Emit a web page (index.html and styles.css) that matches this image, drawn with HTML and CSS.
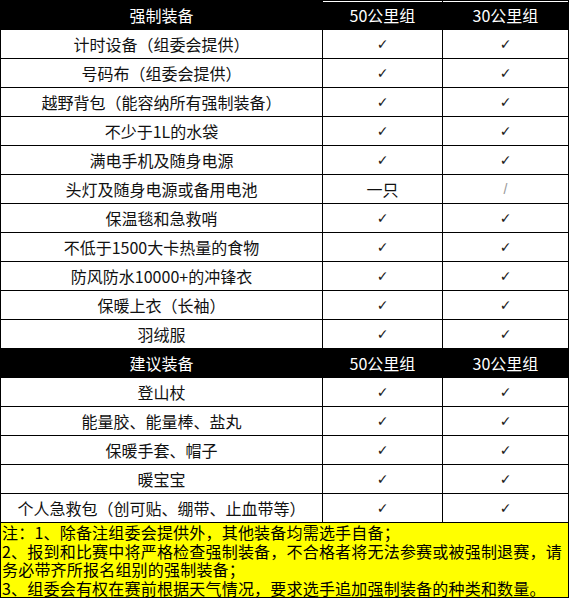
FILE: index.html
```html
<!DOCTYPE html>
<html lang="zh">
<head>
<meta charset="utf-8">
<link rel="stylesheet" href="styles.css">
</head>
<body>
<table class="gear">
  <colgroup><col class="c1"><col class="c2"><col class="c3"></colgroup>
  <tr class="head">
    <td>强制装备</td><td class="top">50公里组</td><td class="top">30公里组</td>
  </tr>
  <tr><td>计时设备（组委会提供）</td><td class="ck">✓</td><td class="ck">✓</td></tr>
  <tr><td>号码布（组委会提供）</td><td class="ck">✓</td><td class="ck">✓</td></tr>
  <tr><td>越野背包（能容纳所有强制装备）</td><td class="ck">✓</td><td class="ck">✓</td></tr>
  <tr><td>不少于1L的水袋</td><td class="ck">✓</td><td class="ck">✓</td></tr>
  <tr><td>满电手机及随身电源</td><td class="ck">✓</td><td class="ck">✓</td></tr>
  <tr><td>头灯及随身电源或备用电池</td><td>一只</td><td class="na">/</td></tr>
  <tr><td>保温毯和急救哨</td><td class="ck">✓</td><td class="ck">✓</td></tr>
  <tr><td>不低于1500大卡热量的食物</td><td class="ck">✓</td><td class="ck">✓</td></tr>
  <tr><td>防风防水10000+的冲锋衣</td><td class="ck">✓</td><td class="ck">✓</td></tr>
  <tr><td>保暖上衣（长袖）</td><td class="ck">✓</td><td class="ck">✓</td></tr>
  <tr><td>羽绒服</td><td class="ck">✓</td><td class="ck">✓</td></tr>
  <tr class="head">
    <td>建议装备</td><td>50公里组</td><td>30公里组</td>
  </tr>
  <tr><td>登山杖</td><td class="ck">✓</td><td class="ck">✓</td></tr>
  <tr><td>能量胶、能量棒、盐丸</td><td class="ck">✓</td><td class="ck">✓</td></tr>
  <tr><td>保暖手套、帽子</td><td class="ck">✓</td><td class="ck">✓</td></tr>
  <tr><td>暖宝宝</td><td class="ck">✓</td><td class="ck">✓</td></tr>
  <tr><td>个人急救包（创可贴、绷带、止血带等）</td><td class="ck">✓</td><td class="ck">✓</td></tr>
  <tr class="note">
    <td colspan="3">
      <div class="line">注：1、除备注组委会提供外，其他装备均需选手自备；</div>
      <div class="line">2、报到和比赛中将严格检查强制装备，不合格者将无法参赛或被强制退赛，请</div>
      <div class="line">务必带齐所报名组别的强制装备；</div>
      <div class="line">3、组委会有权在赛前根据天气情况，要求选手追加强制装备的种类和数量。</div>
    </td>
  </tr>
</table>
</body>
</html>
```

FILE: styles.css
```css
html, body {
  margin: 0;
  padding: 0;
  background: #fff;
}

.gear {
  border-collapse: collapse;
  width: 568px;
  table-layout: fixed;
  font-family: "Noto Sans CJK SC", "Liberation Sans", sans-serif;
  font-size: 16px;
  color: #111;
}

.c1 { width: 322px; }
.c2 { width: 120px; }
.c3 { width: 126px; }

.gear td {
  border: 1px solid #000;
  height: 28px;
  padding: 0;
  text-align: center;
  vertical-align: middle;
  line-height: 18px;
  white-space: nowrap;
}

.head td {
  background: #000;
  color: #fff;
}

.head td.top {
  box-shadow: inset 0 1px 0 #fff;
}

.gear td.ck {
  font-family: "DejaVu Sans", sans-serif;
  font-size: 14px;
  line-height: 14px;
  color: #1a1a1a;
}

.gear td.na {
  font-family: "Liberation Sans", sans-serif;
  font-size: 14px;
  line-height: 14px;
  color: #999;
}

.note td {
  background: #ffff00;
  text-align: left;
  height: auto;
  padding: 0 0 0 1px;
  font-size: 16px;
  color: #000;
}

.note .line {
  line-height: 18.5px;
  letter-spacing: 0.2px;
  white-space: nowrap;
}
```
